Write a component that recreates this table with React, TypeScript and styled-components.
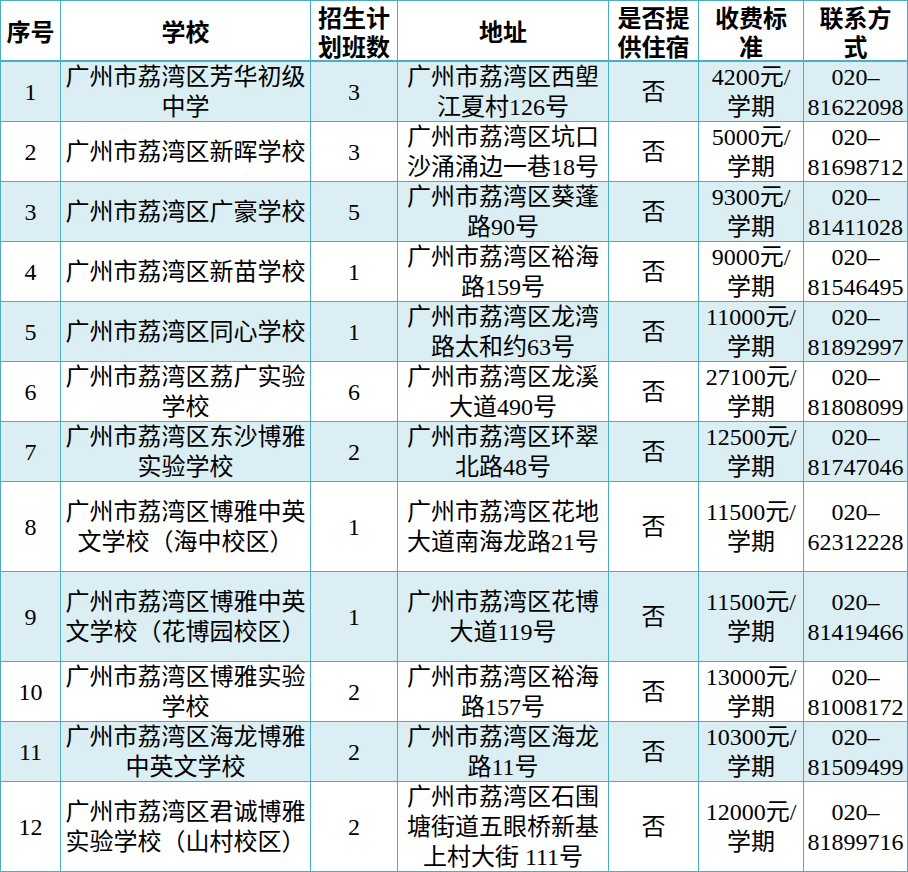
import React from "react";
import styled, { createGlobalStyle } from "styled-components";

const GlobalStyle = createGlobalStyle`
  html, body {
    margin: 0;
    padding: 0;
    background: #ffffff;
  }
  body {
    font-family: "Liberation Serif", "Noto Sans CJK SC", serif;
    color: #000000;
  }
`;

const LINE = "#4bacc6";
const SHADE = "#daeef3";
const COLUMNS = "60px 250px 87px 211px 90px 105px 104px";

type School = {
  no: string;
  name: string[];
  classes: string;
  address: string[];
  boarding: string;
  fee: string[];
  phone: string[];
  tall?: boolean;
};

const headers: string[][] = [
  ["序号"],
  ["学校"],
  ["招生计", "划班数"],
  ["地址"],
  ["是否提", "供住宿"],
  ["收费标", "准"],
  ["联系方", "式"],
];

const schools: School[] = [
  {
    no: "1",
    name: ["广州市荔湾区芳华初级", "中学"],
    classes: "3",
    address: ["广州市荔湾区西塱", "江夏村126号"],
    boarding: "否",
    fee: ["4200元/", "学期"],
    phone: ["020–", "81622098"],
  },
  {
    no: "2",
    name: ["广州市荔湾区新晖学校"],
    classes: "3",
    address: ["广州市荔湾区坑口", "沙涌涌边一巷18号"],
    boarding: "否",
    fee: ["5000元/", "学期"],
    phone: ["020–", "81698712"],
  },
  {
    no: "3",
    name: ["广州市荔湾区广豪学校"],
    classes: "5",
    address: ["广州市荔湾区葵蓬", "路90号"],
    boarding: "否",
    fee: ["9300元/", "学期"],
    phone: ["020–", "81411028"],
  },
  {
    no: "4",
    name: ["广州市荔湾区新苗学校"],
    classes: "1",
    address: ["广州市荔湾区裕海", "路159号"],
    boarding: "否",
    fee: ["9000元/", "学期"],
    phone: ["020–", "81546495"],
  },
  {
    no: "5",
    name: ["广州市荔湾区同心学校"],
    classes: "1",
    address: ["广州市荔湾区龙湾", "路太和约63号"],
    boarding: "否",
    fee: ["11000元/", "学期"],
    phone: ["020–", "81892997"],
  },
  {
    no: "6",
    name: ["广州市荔湾区荔广实验", "学校"],
    classes: "6",
    address: ["广州市荔湾区龙溪", "大道490号"],
    boarding: "否",
    fee: ["27100元/", "学期"],
    phone: ["020–", "81808099"],
  },
  {
    no: "7",
    name: ["广州市荔湾区东沙博雅", "实验学校"],
    classes: "2",
    address: ["广州市荔湾区环翠", "北路48号"],
    boarding: "否",
    fee: ["12500元/", "学期"],
    phone: ["020–", "81747046"],
  },
  {
    no: "8",
    name: ["广州市荔湾区博雅中英", "文学校（海中校区）"],
    classes: "1",
    address: ["广州市荔湾区花地", "大道南海龙路21号"],
    boarding: "否",
    fee: ["11500元/", "学期"],
    phone: ["020–", "62312228"],
    tall: true,
  },
  {
    no: "9",
    name: ["广州市荔湾区博雅中英", "文学校（花博园校区）"],
    classes: "1",
    address: ["广州市荔湾区花博", "大道119号"],
    boarding: "否",
    fee: ["11500元/", "学期"],
    phone: ["020–", "81419466"],
    tall: true,
  },
  {
    no: "10",
    name: ["广州市荔湾区博雅实验", "学校"],
    classes: "2",
    address: ["广州市荔湾区裕海", "路157号"],
    boarding: "否",
    fee: ["13000元/", "学期"],
    phone: ["020–", "81008172"],
  },
  {
    no: "11",
    name: ["广州市荔湾区海龙博雅", "中英文学校"],
    classes: "2",
    address: ["广州市荔湾区海龙", "路11号"],
    boarding: "否",
    fee: ["10300元/", "学期"],
    phone: ["020–", "81509499"],
  },
  {
    no: "12",
    name: ["广州市荔湾区君诚博雅", "实验学校（山村校区）"],
    classes: "2",
    address: ["广州市荔湾区石围", "塘街道五眼桥新基", "上村大街 111号"],
    boarding: "否",
    fee: ["12000元/", "学期"],
    phone: ["020–", "81899716"],
    tall: true,
  },
];

const Table = styled.div`
  width: 908px;
  box-sizing: border-box;
  border-left: 1px solid ${LINE};
  border-top: 1px solid ${LINE};
`;

const Row = styled.div<{ $height: number; $shaded?: boolean; $head?: boolean }>`
  display: grid;
  grid-template-columns: ${COLUMNS};
  height: ${(p) => p.$height}px;
  box-sizing: border-box;
  border-bottom: ${(p) => (p.$head ? 2 : 1)}px solid ${LINE};
  background: ${(p) => (p.$shaded ? SHADE : "#ffffff")};
`;

const Cell = styled.div<{ $head?: boolean }>`
  display: flex;
  flex-direction: column;
  align-items: center;
  justify-content: center;
  box-sizing: border-box;
  border-right: 1px solid ${LINE};
  font-size: 24px;
  line-height: ${(p) => (p.$head ? 29 : 30)}px;
  font-weight: ${(p) => (p.$head ? 700 : 400)};
  font-family: ${(p) =>
    p.$head
      ? `"Noto Sans CJK SC", "Liberation Serif", sans-serif`
      : `"Liberation Serif", "Noto Sans CJK SC", serif`};
  color: #000000;
`;

const Line = styled.span`
  display: block;
  white-space: pre;
  text-align: center;
`;

function Lines({ items }: { items: string[] }) {
  return (
    <>
      {items.map((t, i) => (
        <Line key={i}>{t}</Line>
      ))}
    </>
  );
}

export default function App() {
  return (
    <>
      <GlobalStyle />
      <Table>
        <Row $height={61} $head>
          {headers.map((h, i) => (
            <Cell key={i} $head>
              <Lines items={h} />
            </Cell>
          ))}
        </Row>
        {schools.map((s, i) => (
          <Row key={s.no} $height={s.tall ? 90 : 60} $shaded={i % 2 === 0}>
            <Cell>
              <Line>{s.no}</Line>
            </Cell>
            <Cell>
              <Lines items={s.name} />
            </Cell>
            <Cell>
              <Line>{s.classes}</Line>
            </Cell>
            <Cell>
              <Lines items={s.address} />
            </Cell>
            <Cell>
              <Line>{s.boarding}</Line>
            </Cell>
            <Cell>
              <Lines items={s.fee} />
            </Cell>
            <Cell>
              <Lines items={s.phone} />
            </Cell>
          </Row>
        ))}
      </Table>
    </>
  );
}
